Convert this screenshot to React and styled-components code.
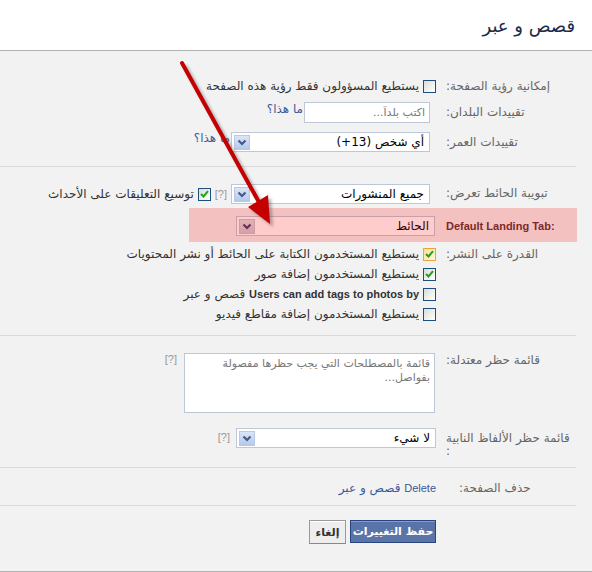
import React from "react";
import styled, { createGlobalStyle } from "styled-components";

const Global = createGlobalStyle`
  html, body { margin: 0; padding: 0; background: #f2f2f2; }
  body { font-family: "DejaVu Sans", sans-serif; font-size: 12px; color: #333; }
`;

const Page = styled.div`
  position: relative;
  width: 592px;
  direction: rtl;
  border-bottom: 1px solid #b4b4b4;
`;

const Header = styled.div`
  height: 50px;
  background: #fff;
  border-bottom: 1px solid #b3b3b3;
  display: flex;
  align-items: center;
  padding-right: 17px;
`;

const Title = styled.h1`
  margin: 0;
  font-size: 18px;
  font-weight: normal;
  color: #1c2a47;
`;

const Content = styled.div`
  width: 576px;
  margin-left: 0;
  margin-right: auto;
`;

const Section = styled.div`
  display: flex;
  flex-direction: column;
  padding: ${(p) => p.$pad};
  border-bottom: ${(p) => (p.$noBorder ? "none" : "1px solid #d9d9d9")};
`;

const Row = styled.div`
  position: relative;
  display: flex;
  align-items: flex-start;
  gap: 10px;
  margin-top: ${(p) => p.$mt || 0}px;
`;

const Label = styled.div`
  flex: 0 0 130px;
  box-sizing: border-box;
  text-align: left;
  color: #666;
  line-height: 13px;
  padding-top: ${(p) => p.$pt || 0}px;
  padding-left: ${(p) => p.$pl || 0}px;
`;

const En = styled.span`
  font-family: "Liberation Sans", Arial, sans-serif;
  font-size: 11px;
  font-weight: ${(p) => (p.$bold ? "bold" : "normal")};
`;

const LtrLabel = styled(En)`
  direction: ltr;
  unicode-bidi: isolate;
  display: inline-block;
  color: #5a3434;
`;

const Field = styled.div`
  flex: 1;
  display: flex;
  align-items: ${(p) => p.$align || "center"};
  gap: ${(p) => p.$gap || 0}px;
`;

const Stack = styled.div`
  flex: 1;
  display: flex;
  flex-direction: column;
`;

const CheckRow = styled.label`
  display: flex;
  align-items: center;
  gap: 4px;
  height: 20px;
  color: #333;
  line-height: 13px;
  white-space: nowrap;
`;

const Box = styled.span`
  flex: none;
  width: 13px;
  height: 13px;
  box-sizing: border-box;
  display: inline-flex;
  align-items: center;
  justify-content: center;
  border: 1px solid ${(p) => (p.$hover ? "#eaa43a" : "#1c4f7e")};
  background: ${(p) =>
    p.$hover
      ? "linear-gradient(135deg, #fbe09a, #fff7d8)"
      : "linear-gradient(135deg, #dcdcd6, #ffffff)"};
`;

const TextInput = styled.input`
  width: 126px;
  height: 21px;
  box-sizing: border-box;
  border: 1px solid #bdc7d8;
  background: #fff;
  font-family: inherit;
  font-size: 11px;
  padding: 0 4px;
  direction: rtl;
  margin: 0 6px 0 0;
  &::placeholder { color: #777; }
`;

const SelectBox = styled.div`
  width: ${(p) => p.$w}px;
  height: 20px;
  box-sizing: border-box;
  margin-right: ${(p) => p.$mr || 0}px;
  border: 1px solid #bdc7d8;
  background: #fff;
  display: flex;
  align-items: center;
  justify-content: space-between;
  padding: 0 5px 0 2px;
  color: #000;
  flex: none;
`;

const DropBtn = styled.span`
  width: 16px;
  height: 15px;
  box-sizing: border-box;
  display: inline-flex;
  align-items: center;
  justify-content: center;
  border: 1px solid ${(p) => (p.$gray ? "#c4c4cc" : "#b7c8e8")};
  background: ${(p) =>
    p.$gray
      ? "linear-gradient(#dcdce2, #c9c9d3)"
      : "linear-gradient(#dbe5f6, #b6c8ea)"};
`;

const Link = styled.a`
  color: #3b5998;
  text-decoration: none;
  line-height: 13px;
  cursor: pointer;
  margin-top: ${(p) => p.$mt || 0}px;
`;

const Help = styled(En)`
  color: #999;
  line-height: 13px;
  margin-top: ${(p) => p.$mt || 0}px;
`;

const TextArea = styled.textarea`
  width: 251px;
  height: 60px;
  box-sizing: border-box;
  border: 1px solid #bdc7d8;
  background: #fff;
  resize: none;
  font-family: inherit;
  font-size: 11px;
  line-height: 14px;
  padding: 3px 4px;
  margin: 0 1px 0 0;
  direction: rtl;
  &::placeholder { color: #777; }
`;

const Highlight = styled.div`
  position: absolute;
  left: 189px;
  right: -1px;
  top: -8px;
  bottom: -6px;
  background: rgba(255, 0, 0, 0.2);
  pointer-events: none;
`;

const Buttons = styled.div`
  display: flex;
  gap: 4px;
  padding-right: 140px;
  align-items: flex-start;
`;

const Button = styled.button`
  font-family: inherit;
  font-size: 11px;
  font-weight: bold;
  width: ${(p) => (p.$primary ? 86 : 37)}px;
  height: ${(p) => (p.$primary ? 23 : 24)}px;
  padding: 0;
  margin: 0;
  border: 1px solid;
  border-color: ${(p) => (p.$primary ? "#29447e" : "#999 #999 #888")};
  background: ${(p) => (p.$primary ? "#5b74a8" : "#eeeeee")};
  color: ${(p) => (p.$primary ? "#fff" : "#333")};
  box-shadow: inset 0 1px 0 ${(p) => (p.$primary ? "#8a9cc2" : "#fff")};
  cursor: pointer;
`;

const ArrowLayer = styled.svg`
  position: absolute;
  left: 0;
  top: 0;
  pointer-events: none;
`;

const Chevron = ({ color }) => (
  <svg width="10" height="7" viewBox="0 0 10 7">
    <path d="M1.5 1.5 L5 5 L8.5 1.5" fill="none" stroke={color} strokeWidth="2.2" />
  </svg>
);

const Tick = () => (
  <svg width="9" height="8" viewBox="0 0 9 8">
    <path d="M1 4 L3.5 6.5 L8 1.2" fill="none" stroke="#21a121" strokeWidth="2" />
  </svg>
);

const Check = ({ checked, hover }) => (
  <Box $hover={hover}>{checked && <Tick />}</Box>
);

const Select = ({ w, text, gray, mr }) => (
  <SelectBox $w={w} $mr={mr}>
    <span>{text}</span>
    <DropBtn $gray={gray}>
      <Chevron color={gray ? "#3d3d75" : "#45598a"} />
    </DropBtn>
  </SelectBox>
);

export default function App() {
  return (
    <>
      <Global />
      <Page>
        <Header>
          <Title>قصص و عبر</Title>
        </Header>
        <Content>
          <Section $pad="25px 0 14px">
            <Row>
              <Label $pt={4}>إمكانية رؤية الصفحة:</Label>
              <Field>
                <CheckRow>
                  <Check />
                  <span>يستطيع المسؤولون فقط رؤية هذه الصفحة</span>
                </CheckRow>
              </Field>
            </Row>
            <Row $mt={6}>
              <Label $pt={4}>تقييدات البلدان:</Label>
              <Field $align="flex-start" $gap={1}>
                <TextInput placeholder="اكتب بلداً..." />
                <Link $mt={1}>ما هذا؟</Link>
              </Field>
            </Row>
            <Row $mt={9}>
              <Label $pt={4}>تقييدات العمر:</Label>
              <Field $align="flex-start" $gap={1}>
                <Select w={199} mr={6} text="أي شخص (13+)" />
                <Link>ما هذا؟</Link>
              </Field>
            </Row>
          </Section>

          <Section $pad="17px 0 11px">
            <Row>
              <Label $pt={3}>تبويبة الحائط تعرض:</Label>
              <Field $gap={4}>
                <Select w={199} mr={6} text="جميع المنشورات" />
                <Help>[?]</Help>
                <CheckRow>
                  <Check checked />
                  <span>توسيع التعليقات على الأحداث</span>
                </CheckRow>
              </Field>
            </Row>
            <Row $mt={12}>
              <Highlight />
              <Label $pt={4}>
                <LtrLabel $bold>Default Landing Tab:</LtrLabel>
              </Label>
              <Field>
                <Select w={199} mr={1} text="الحائط" gray />
              </Field>
            </Row>
            <Row $mt={8}>
              <Label $pt={4}>القدرة على النشر:</Label>
              <Stack>
                <CheckRow>
                  <Check checked hover />
                  <span>يستطيع المستخدمون الكتابة على الحائط أو نشر المحتويات</span>
                </CheckRow>
                <CheckRow>
                  <Check checked />
                  <span>يستطيع المستخدمون إضافة صور</span>
                </CheckRow>
                <CheckRow>
                  <Check />
                  <span>
                    <En $bold>Users can add tags to photos by</En> قصص و عبر
                  </span>
                </CheckRow>
                <CheckRow>
                  <Check />
                  <span>يستطيع المستخدمون إضافة مقاطع فيديو</span>
                </CheckRow>
              </Stack>
            </Row>
          </Section>

          <Section $pad="17px 0 9px">
            <Row>
              <Label $pt={1}>قائمة حظر معتدلة:</Label>
              <Field $align="flex-start" $gap={7}>
                <TextArea placeholder={"قائمة بالمصطلحات التي يجب حظرها مفصولة\nبفواصل..."} />
                <Help>[?]</Help>
              </Field>
            </Row>
            <Row $mt={15}>
              <Label $pt={4}>
                قائمة حظر الألفاظ النابية
                <br />:
              </Label>
              <Field $align="flex-start" $gap={6}>
                <Select w={200} text="لا شيء" />
                <Help $mt={3}>[?]</Help>
              </Field>
            </Row>
          </Section>

          <Section $pad="14px 0 10px">
            <Row>
              <Label $pl={13}>حذف الصفحة:</Label>
              <Field>
                <Link>
                  <En>Delete</En> قصص و عبر
                </Link>
              </Field>
            </Row>
          </Section>

          <Section $pad="14px 0 27px" $noBorder>
            <Buttons>
              <Button $primary>حفظ التغييرات</Button>
              <Button>إلغاء</Button>
            </Buttons>
          </Section>
        </Content>
        <ArrowLayer width="592" height="572" viewBox="0 0 592 572">
          <defs>
            <filter id="sh" x="-20%" y="-20%" width="140%" height="140%">
              <feGaussianBlur stdDeviation="1.5" />
            </filter>
          </defs>
          <g transform="translate(3,3)" opacity="0.45" filter="url(#sh)">
            <line x1="182" y1="63" x2="260" y2="204" stroke="#555" strokeWidth="4" />
            <polygon points="270,224 248,207 268,195" fill="#555" />
          </g>
          <line x1="182" y1="63" x2="260" y2="204" stroke="#c40000" strokeWidth="4" strokeLinecap="round" />
          <polygon points="270,224 248,207 268,195" fill="#c40000" />
        </ArrowLayer>
      </Page>
    </>
  );
}
